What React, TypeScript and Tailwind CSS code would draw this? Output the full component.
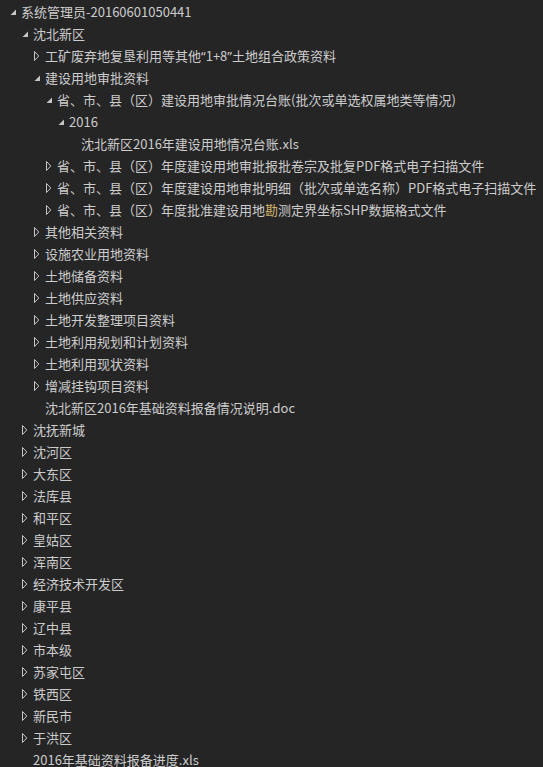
type Node = {
  label: React.ReactNode
  level: number
  kind: "open" | "closed" | "file"
}

const indent = ["pl-[8px]", "pl-[20px]", "pl-[32px]", "pl-[44px]", "pl-[56px]", "pl-[68px]"]

const quote = "font-['Noto_Sans',sans-serif]"

const rows: Node[] = [
  { label: "系统管理员-20160601050441", level: 0, kind: "open" },
  { label: "沈北新区", level: 1, kind: "open" },
  {
    label: (
      <>
        工矿废弃地复垦利用等其他<span className={quote}>“</span>1+8<span className={quote}>”</span>
        土地组合政策资料
      </>
    ),
    level: 2,
    kind: "closed",
  },
  { label: "建设用地审批资料", level: 2, kind: "open" },
  { label: "省、市、县（区）建设用地审批情况台账(批次或单选权属地类等情况)", level: 3, kind: "open" },
  { label: "2016", level: 4, kind: "open" },
  { label: "沈北新区2016年建设用地情况台账.xls", level: 5, kind: "file" },
  { label: "省、市、县（区）年度建设用地审批报批卷宗及批复PDF格式电子扫描文件", level: 3, kind: "closed" },
  { label: "省、市、县（区）年度建设用地审批明细（批次或单选名称）PDF格式电子扫描文件", level: 3, kind: "closed" },
  {
    label: (
      <>
        省、市、县（区）年度批准建设用地<span className="text-[#d4b36a]">勘</span>测定界坐标SHP数据格式文件
      </>
    ),
    level: 3,
    kind: "closed",
  },
  { label: "其他相关资料", level: 2, kind: "closed" },
  { label: "设施农业用地资料", level: 2, kind: "closed" },
  { label: "土地储备资料", level: 2, kind: "closed" },
  { label: "土地供应资料", level: 2, kind: "closed" },
  { label: "土地开发整理项目资料", level: 2, kind: "closed" },
  { label: "土地利用规划和计划资料", level: 2, kind: "closed" },
  { label: "土地利用现状资料", level: 2, kind: "closed" },
  { label: "增减挂钩项目资料", level: 2, kind: "closed" },
  { label: "沈北新区2016年基础资料报备情况说明.doc", level: 2, kind: "file" },
  { label: "沈抚新城", level: 1, kind: "closed" },
  { label: "沈河区", level: 1, kind: "closed" },
  { label: "大东区", level: 1, kind: "closed" },
  { label: "法库县", level: 1, kind: "closed" },
  { label: "和平区", level: 1, kind: "closed" },
  { label: "皇姑区", level: 1, kind: "closed" },
  { label: "浑南区", level: 1, kind: "closed" },
  { label: "经济技术开发区", level: 1, kind: "closed" },
  { label: "康平县", level: 1, kind: "closed" },
  { label: "辽中县", level: 1, kind: "closed" },
  { label: "市本级", level: 1, kind: "closed" },
  { label: "苏家屯区", level: 1, kind: "closed" },
  { label: "铁西区", level: 1, kind: "closed" },
  { label: "新民市", level: 1, kind: "closed" },
  { label: "于洪区", level: 1, kind: "closed" },
  { label: "2016年基础资料报备进度.xls", level: 1, kind: "file" },
]

function Twisty({ kind }: { kind: Node["kind"] }) {
  return (
    <svg width="13" height="22" viewBox="0 0 13 22" className="shrink-0">
      {kind === "open" && <polygon points="8,8.5 8,14 2.5,14" fill="#c5c5c5" />}
      {kind === "closed" && (
        <polygon points="2.5,6.5 6.8,11 2.5,15.5" fill="none" stroke="#c5c5c5" strokeWidth="1" />
      )}
    </svg>
  )
}

export default function App() {
  return (
    <div className="w-[543px] h-[767px] overflow-hidden bg-[#252526] pt-px text-[13px] text-[#cccccc] font-['Noto_Sans_CJK_SC','Noto_Sans',sans-serif]">
      {rows.map((row, i) => (
        <div key={i} className={`flex items-center h-[22px] whitespace-nowrap ${indent[row.level]}`}>
          <Twisty kind={row.kind} />
          <span className="leading-[22px]">{row.label}</span>
        </div>
      ))}
    </div>
  )
}
